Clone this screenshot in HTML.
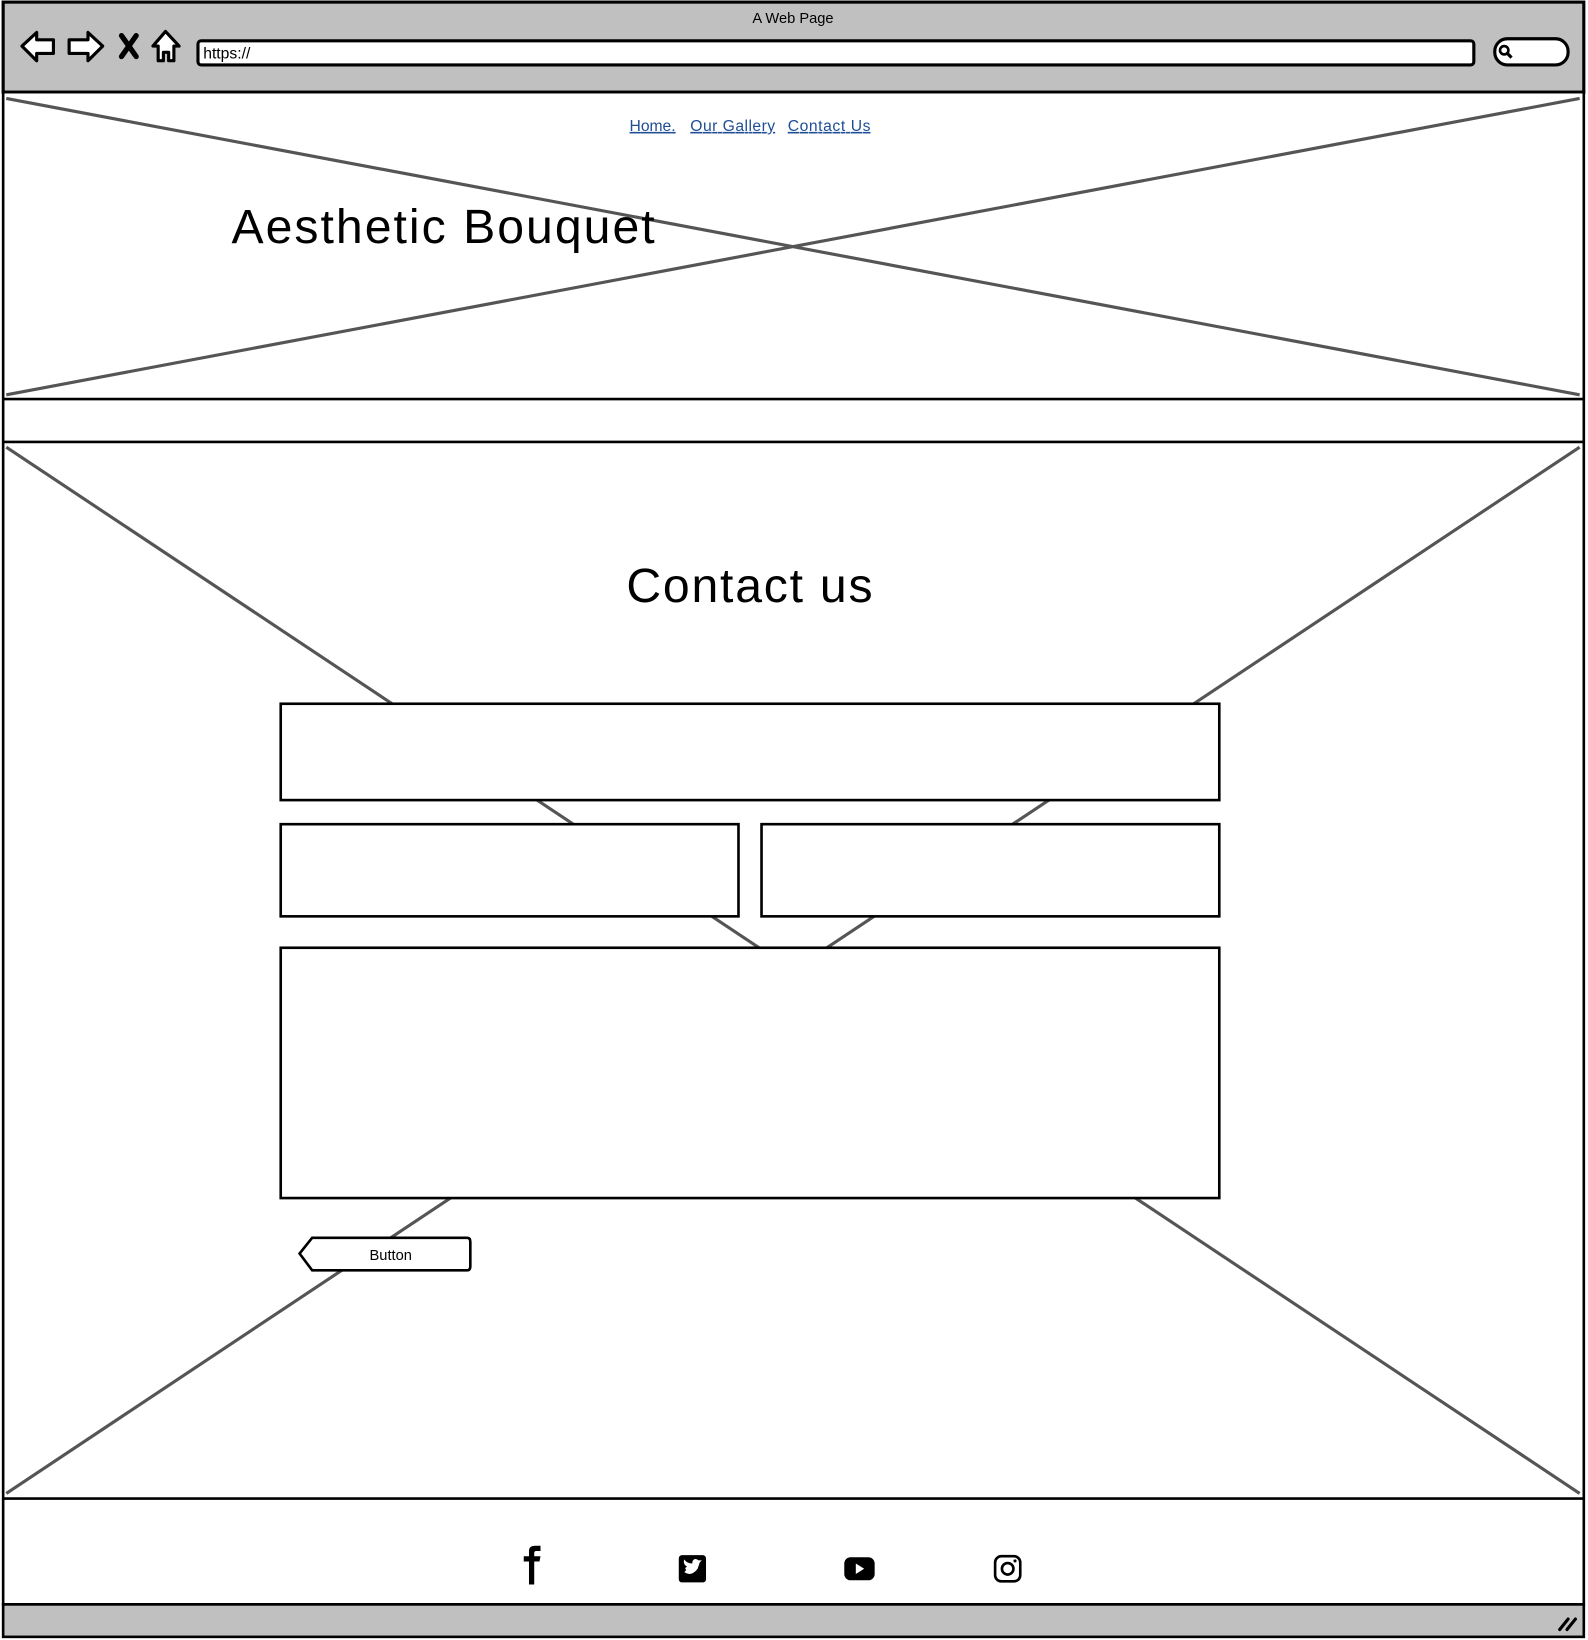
<!DOCTYPE html>
<html><head><meta charset="utf-8"><style>
html,body{margin:0;padding:0;background:#fff;}
svg{display:block;}
text{font-family:"Liberation Sans",sans-serif;}
</style></head><body>
<svg width="1588" height="1640" viewBox="0 0 1516 1566" preserveAspectRatio="none" xmlns="http://www.w3.org/2000/svg">
<rect x="0" y="0" width="1516" height="1566" fill="#fff"/>
<rect x="3" y="2" width="1509" height="86" fill="#c0c0c0" stroke="#000" stroke-width="3"/>
<text x="757" y="22" font-size="14" text-anchor="middle" fill="#000">A Web Page</text>
<path d="M21 44 L35 31 L35 38 L51 38 L51 51 L35 51 L35 58 Z" fill="#fff" stroke="#000" stroke-width="3" stroke-linejoin="round"/>
<path d="M98 44 L84 31 L84 38 L66 38 L66 51 L84 51 L84 58 Z" fill="#fff" stroke="#000" stroke-width="3" stroke-linejoin="round"/>
<path d="M116 34 L130 54 M130 34 L116 54" stroke="#000" stroke-width="5" stroke-linecap="round"/>
<path d="M158 30 L146 44 L151 44 L151 58 L156 58 L156 50 L161 50 L161 58 L166 58 L166 44 L171 44 Z" fill="#fff" stroke="#000" stroke-width="3" stroke-linejoin="round"/>
<rect x="189" y="39" width="1218" height="23" rx="3" fill="#fff" stroke="#000" stroke-width="3"/>
<text x="194" y="56" font-size="15" fill="#000">https://</text>
<rect x="1427" y="37" width="70" height="25" rx="12" fill="#fff" stroke="#000" stroke-width="3"/>
<circle cx="1436" cy="48" r="4" fill="none" stroke="#000" stroke-width="2.5"/>
<path d="M1439 51 L1443 55" stroke="#000" stroke-width="3"/>
<rect x="3" y="88" width="1509" height="1444" fill="#fff" stroke="#000" stroke-width="2.5"/>
<line x1="3" y1="381" x2="1512" y2="381" stroke="#000" stroke-width="2.5"/>
<path d="M6 94 L1508 377 M1508 94 L6 377" stroke="#555" stroke-width="3"/>
<line x1="3" y1="422" x2="1512" y2="422" stroke="#000" stroke-width="2.5"/>
<text x="601" y="125" font-size="15" fill="#1f4e96" text-decoration="underline" textLength="44">Home.</text>
<text x="659" y="125" font-size="15" fill="#1f4e96" text-decoration="underline" textLength="81">Our Gallery</text>
<text x="752" y="125" font-size="15" fill="#1f4e96" text-decoration="underline" textLength="79">Contact Us</text>
<text x="221" y="232" font-size="46" fill="#000" textLength="404">Aesthetic Bouquet</text>
<path d="M6 427 L1508 1426 M1508 427 L6 1426" stroke="#555" stroke-width="3"/>
<line x1="3" y1="1431" x2="1512" y2="1431" stroke="#000" stroke-width="2.5"/>
<text x="598" y="575" font-size="46" fill="#000" textLength="235">Contact us</text>
<rect x="268" y="672" width="896" height="92" fill="#fff" stroke="#000" stroke-width="2.5"/>
<rect x="268" y="787" width="437" height="88" fill="#fff" stroke="#000" stroke-width="2.5"/>
<rect x="727" y="787" width="437" height="88" fill="#fff" stroke="#000" stroke-width="2.5"/>
<rect x="268" y="905" width="896" height="239" fill="#fff" stroke="#000" stroke-width="2.5"/>
<path d="M298 1182 L446 1182 Q449 1182 449 1186 L449 1209 Q449 1213 446 1213 L298 1213 L286 1197 Z" fill="#fff" stroke="#000" stroke-width="2.5"/>
<text x="373" y="1203" font-size="14" text-anchor="middle" fill="#000">Button</text>
<path d="M505 1513 L505 1491 L500 1491 L500 1486 L505 1486 L505 1481 Q505 1476 511 1476 L516 1476 L516 1481 L512 1481 Q510 1481 510 1483 L510 1486 L516 1486 L515 1491 L510 1491 L510 1513 Z" fill="#000"/>
<rect x="648" y="1485" width="26" height="26" rx="3" fill="#000"/>
<path d="M653 1501 Q660 1506 666 1498 L668 1492 L670 1490 L667 1490 Q663 1487 661 1491 L661 1493 Q656 1493 653 1489 Q652 1494 656 1496 Q653 1497 655 1499 Q654 1501 653 1501 Z" fill="#fff"/>
<rect x="806" y="1487" width="29" height="22" rx="6" fill="#000"/>
<path d="M817 1493 L825 1498 L817 1503 Z" fill="#fff"/>
<rect x="950" y="1486" width="24" height="24" rx="6" fill="none" stroke="#000" stroke-width="2.5"/>
<circle cx="962" cy="1498" r="5.5" fill="none" stroke="#000" stroke-width="2.5"/>
<circle cx="969" cy="1490.5" r="1.5" fill="#000"/>
<rect x="3" y="1532" width="1509" height="31" fill="#c0c0c0" stroke="#000" stroke-width="2.5"/>
<path d="M1489 1556 L1497 1546 M1496 1556 L1504 1546" stroke="#000" stroke-width="3" stroke-linecap="round"/>
</svg>
</body></html>
